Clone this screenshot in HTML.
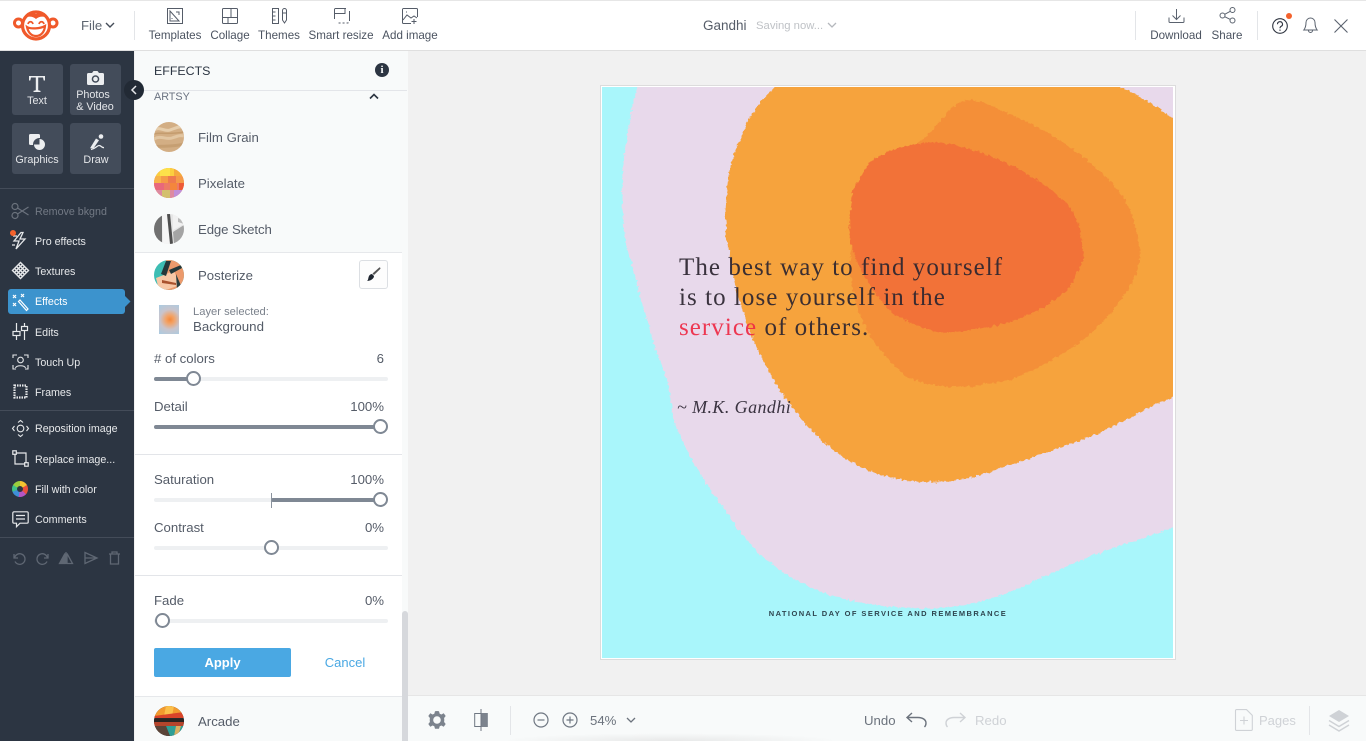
<!DOCTYPE html>
<html><head><meta charset="utf-8"><title>Gandhi</title>
<style>
*{box-sizing:border-box}
html,body{margin:0;padding:0;width:1366px;height:741px;overflow:hidden;background:#f1f1f1;font-family:"Liberation Sans",sans-serif}
.a{position:absolute}
.t{position:absolute;white-space:nowrap;line-height:20px;height:20px;margin-top:2px}
.c{transform:translateX(-50%)}
.r{transform:translateX(-100%)}
.tb{font-size:11.6px;color:#4b5360;top:24px}
.m{font-size:10.7px;color:#e6e8ea;left:35px}
.bl{font-size:10.8px;color:#e4e6e9;text-align:center}
.p{font-size:13.2px;color:#555c68;left:198px}
.l{font-size:13.2px;color:#555c68}
.tr{position:absolute;left:154px;width:234px;height:4px;border-radius:2px;background:#eef0f2}
.fl{position:absolute;height:4px;background:#7f8894;border-radius:2px}
.th{position:absolute;width:15px;height:15px;border-radius:50%;background:#fff;border:2px solid #7f8894}
.sep{position:absolute;background:#e3e5e9;height:1px}
.bt{position:absolute;background:#434c5a;border-radius:3px;width:51px;height:51px}
svg{position:absolute;overflow:visible}
.circ{position:absolute;left:154px;width:30px;height:30px;border-radius:50%;overflow:hidden}
.circ svg{left:0;top:0;overflow:hidden}
.q{font-family:"Liberation Serif",serif;font-size:25px;line-height:20px;letter-spacing:1.05px;color:#2c2530;opacity:.92}
</style></head><body>

<!-- top bar -->
<div class="a" style="left:0;top:0;width:1366px;height:51px;background:#fff;border-top:1px solid #e6e6e6;border-bottom:1px solid #dfdfdf"></div>

<svg style="left:0;top:0" width="70" height="50" viewBox="0 0 70 50">
<circle cx="18.500" cy="23" r="4" fill="#fff" stroke="#f0592a" stroke-width="3"/>
<circle cx="53" cy="23" r="4" fill="#fff" stroke="#f0592a" stroke-width="3"/>
<circle cx="36" cy="25.500" r="13.500" fill="#fff" stroke="#f0592a" stroke-width="3.200"/>
<path d="M24 18c3-5 8-6 12-4 4-2 9-1 12 4-4-2-9-2-12 1-3-3-8-3-12-1z" fill="#f0592a"/>
<path d="M28 24c1-3 4-3 5 0M39 24c1-3 4-3 5 0" fill="none" stroke="#f0592a" stroke-width="1.800"/>
<path d="M27 27c3 2 13 2 18-1-.5 6-4 10-9 10s-8-4-9-9z" fill="#fff" stroke="#f0592a" stroke-width="2.200"/>
</svg>
<div class="t" style="left:81px;top:14px;font-size:13.2px;color:#5d6570">File</div>
<svg style="left:105px;top:22px" width="10" height="7"><path d="M1 1l4 4 4-4" fill="none" stroke="#444c58" stroke-width="1.400"/></svg>
<div class="a" style="left:134px;top:11px;width:1px;height:29px;background:#e3e5e8"></div>

<svg style="left:167px;top:8px" width="16" height="16" fill="none" stroke="#555c68" stroke-width="1"><rect x=".5" y=".5" width="15" height="15"/><path d="M3 3l9 10H3zM5 10v1M9 4h3v3"/></svg>
<svg style="left:222px;top:8px" width="16" height="16" fill="none" stroke="#555c68" stroke-width="1"><rect x=".5" y=".5" width="15" height="15" rx="1"/><path d="M9 .5v9M.5 9.500h15M6 9.500v6"/></svg>
<svg style="left:272px;top:8px" width="16" height="16" fill="none" stroke="#555c68" stroke-width="1"><rect x=".5" y=".5" width="6" height="15"/><path d="M.5 4h3M.5 8h3M.5 12h3M10.500 2.500a2 2 0 0 1 4 0V12l-2 3-2-3zM10.500 5h4"/></svg>
<svg style="left:334px;top:8px" width="16" height="16" fill="none" stroke="#555c68" stroke-width="1"><path d="M.5 11V1.500a1 1 0 0 1 1-1H12M.5 5.500H11V.5"/><path d="M15.500 3v10a2 2 0 0 1-2 2H3M15.500 5v8" stroke-dasharray="2 2"/></svg>
<svg style="left:402px;top:8px" width="16" height="16" fill="none" stroke="#555c68" stroke-width="1"><path d="M9 15.500H1.500a1 1 0 0 1-1-1v-13a1 1 0 0 1 1-1h13a1 1 0 0 1 1 1V9M1 12l4-5 4 3 3-2 3 2M12 11v5M9.500 13.500h5M4 4h1"/></svg>

<div class="t tb c" style="left:175px">Templates</div>
<div class="t tb c" style="left:230px">Collage</div>
<div class="t tb c" style="left:279px">Themes</div>
<div class="t tb c" style="left:341px">Smart resize</div>
<div class="t tb c" style="left:410px">Add image</div>

<div class="t" style="left:703px;top:14px;font-size:13.5px;color:#555c68">Gandhi</div>
<div class="t" style="left:756px;top:14px;font-size:11.300px;color:#bfc2c6">Saving now...</div>
<svg style="left:827px;top:22px" width="10" height="7"><path d="M1 1l4 4 4-4" fill="none" stroke="#b5b8bd" stroke-width="1.300"/></svg>

<div class="a" style="left:1135px;top:11px;width:1px;height:29px;background:#e3e5e8"></div>
<div class="a" style="left:1257px;top:11px;width:1px;height:29px;background:#e3e5e8"></div>
<svg style="left:1168px;top:8px" width="17" height="16" fill="none" stroke="#5a626e" stroke-width="1"><path d="M8.500 1v10M4.500 7.500l4 4 4-4M1 9.500v4a1 1 0 0 0 1 1h13a1 1 0 0 0 1-1v-4"/></svg>
<svg style="left:1219px;top:7px" width="17" height="17" fill="none" stroke="#5a626e" stroke-width="1"><circle cx="3.500" cy="8.500" r="2.500"/><circle cx="13.500" cy="3" r="2.500"/><circle cx="13.500" cy="13.500" r="2.500"/><path d="M5.700 7.300l5.600-3M5.700 9.700l5.600 2.700"/></svg>
<div class="t tb c" style="left:1176px">Download</div>
<div class="t tb c" style="left:1227px">Share</div>

<svg style="left:1272px;top:18px" width="16" height="16" fill="none" stroke="#2e3440" stroke-width="1.100"><circle cx="8" cy="8" r="7.300"/><path d="M5.500 6.200a2.500 2.500 0 1 1 3.600 2.200c-.8.400-1.100 1-1.100 1.900M8 11.500v1.400"/></svg>
<div class="a" style="left:1286px;top:13px;width:6px;height:6px;border-radius:50%;background:#f4622c"></div>
<svg style="left:1303px;top:17px" width="15" height="16" fill="none" stroke="#5a626e" stroke-width="1"><path d="M7.500 1a4.500 4.500 0 0 0-4.500 4.500c0 4-1 6-2.200 7.500h13.400C13 11.500 12 9.500 12 5.500A4.500 4.500 0 0 0 7.500 1zM5.500 13.500a2 2 0 0 0 4 0"/></svg>
<svg style="left:1334px;top:19px" width="14" height="14" fill="none" stroke="#5a626e" stroke-width="1.100"><path d="M.5.500l13 13M13.500.500l-13 13"/></svg>

<!-- sidebar -->
<div class="a" style="left:0;top:51px;width:134px;height:690px;background:#2c3542"></div>
<div class="bt" style="left:12px;top:64px"></div>
<div class="bt" style="left:70px;top:64px"></div>
<div class="bt" style="left:12px;top:123px"></div>
<div class="bt" style="left:70px;top:123px"></div>
<svg style="left:29px;top:76px" width="16" height="16" fill="#eceef0"><path d="M0 0h16v4.500h-1.300L14 1.500H9.200v12.800l2.300.6V16h-7v-1.100l2.300-.6V1.500H2l-.7 3H0z"/></svg>
<div class="t bl c" style="left:37px;top:89px">Text</div>
<svg style="left:87px;top:71px" width="17" height="14"><path d="M5 2l1.500-2h4L12 2h3.500A1.500 1.500 0 0 1 17 3.500v9a1.500 1.500 0 0 1-1.500 1.500h-14A1.500 1.500 0 0 1 0 12.500v-9A1.500 1.500 0 0 1 1.500 2z" fill="#eceef0"/><circle cx="8.500" cy="8" r="3.800" fill="#434c5a"/><circle cx="8.500" cy="8" r="2.300" fill="#eceef0"/></svg>
<div class="t bl c" style="left:93px;top:83px">Photos</div>
<div class="t bl c" style="left:95px;top:95px;width:50px">&amp; Video</div>
<svg style="left:29px;top:134px" width="17" height="17"><rect x="0" y="0" width="11" height="11" rx="1.500" fill="#eceef0"/><circle cx="10.500" cy="10.500" r="6.500" fill="#434c5a"/><path d="M10.500 5a5.500 5.500 0 1 1-5.500 5.500h5.500z" fill="#eceef0"/></svg>
<div class="t bl c" style="left:37px;top:148px">Graphics</div>
<svg style="left:87px;top:134px" width="18" height="17" fill="#eceef0"><circle cx="14" cy="2.500" r="2.300"/><path d="M9 4.500l3 1.800-5.500 8H3z"/><path d="M4 15.500c5-1 6-4 8-4 2.500 0 2 2 5 2.200" fill="none" stroke="#eceef0" stroke-width="1.300"/></svg>
<div class="t bl c" style="left:96px;top:148px">Draw</div>

<div class="a" style="left:0;top:188px;width:134px;height:1px;background:#444c59"></div>

<svg style="left:11px;top:203px" width="18" height="16" fill="none" stroke="#6b727d" stroke-width="1.200"><circle cx="4" cy="3.500" r="3"/><circle cx="4" cy="12.500" r="3"/><path d="M6.500 5l11 7M6.500 11l11-7"/></svg>
<div class="t m" style="top:200px;color:#727984">Remove bkgnd</div>
<svg style="left:12px;top:232px" width="17" height="18" fill="none" stroke="#e6e8ea" stroke-width="1.300"><path d="M9 .5L2 9h5l-3 8 9-10H8l3-6.500zM1 4h4M0 13h3"/></svg>
<div class="a" style="left:10px;top:230px;width:6px;height:6px;border-radius:50%;background:#f4622c"></div>
<div class="t m" style="top:230px">Pro effects</div>
<svg style="left:12px;top:262px" width="17" height="17" fill="none" stroke="#e6e8ea" stroke-width="1.400"><path d="M8.500.5l8 8-8 8-8-8zM4.500 4.500l8 8M12.500 4.500l-8 8M6.500 2.500l8 8M10.500 2.500l-8 8M2.500 6.500l8 8M14.500 6.500l-8 8"/></svg>
<div class="t m" style="top:260px">Textures</div>
<div class="a" style="left:8px;top:289px;width:117px;height:25px;border-radius:3px;background:#3c93cd"></div>
<svg style="left:125px;top:296px" width="6" height="11"><path d="M0 0l5.500 5.500L0 11z" fill="#3c93cd"/></svg>
<svg style="left:12px;top:293px" width="17" height="18" fill="none" stroke="#fff" stroke-width="1.200"><path d="M8 7l8 9-1.500 1.500-8-9zM1 2l3 3M4 2L1 5M9 1l3 3M12 1L9 4M1 10l3 3M4 10l-3 3"/></svg>
<div class="t m" style="top:290px;color:#fff">Effects</div>
<svg style="left:12px;top:323px" width="17" height="17" fill="none" stroke="#e6e8ea" stroke-width="1.200"><path d="M4.500 0v8M4.500 13v4M12.500 0v3M12.500 8v9"/><rect x="1" y="8.500" width="7" height="4"/><rect x="9.500" y="3.500" width="6" height="4"/></svg>
<div class="t m" style="top:321px">Edits</div>
<svg style="left:12px;top:354px" width="17" height="16" fill="none" stroke="#e6e8ea" stroke-width="1.100"><path d="M1 4V1h4M12 1h4v3M1 11v4h3M16 11v4h-3"/><circle cx="8.500" cy="6" r="2.800"/><path d="M3.500 14c1-3 9-3 10 0"/></svg>
<div class="t m" style="top:351px">Touch Up</div>
<svg style="left:13px;top:384px" width="15" height="15" fill="none" stroke="#e6e8ea"><rect x="1.500" y="1.500" width="12" height="12" stroke-width="2.200" stroke-dasharray="1.500 1"/></svg>
<div class="t m" style="top:381px">Frames</div>
<div class="a" style="left:0;top:410px;width:134px;height:1px;background:#444c59"></div>
<svg style="left:12px;top:420px" width="17" height="17" fill="none" stroke="#e6e8ea" stroke-width="1.100"><circle cx="8.500" cy="8.500" r="3.300"/><path d="M6 2.500l2.500-2 2.500 2M6 14.500l2.500 2 2.500-2M2.500 6L.5 8.500l2 2.500M14.500 6l2 2.500-2 2.500"/></svg>
<div class="t m" style="top:417px">Reposition image</div>
<svg style="left:12px;top:450px" width="17" height="17" fill="none" stroke="#e6e8ea" stroke-width="1.200"><rect x=".8" y=".8" width="3.500" height="3.500"/><rect x="12.700" y="12.700" width="3.500" height="3.500"/><path d="M4.500 3h9.500v9.500M3 4.500V14h9.500"/></svg>
<div class="t m" style="top:448px">Replace image...</div>
<div class="a" style="left:12px;top:481px;width:16px;height:16px;border-radius:50%;background:conic-gradient(#f4c430 0 60deg,#e9503c 60deg 130deg,#b455c4 130deg 190deg,#3e8fd8 190deg 250deg,#3fbf8a 250deg 300deg,#9ccc3c 300deg 360deg)"></div>
<div class="a" style="left:17px;top:486px;width:6px;height:6px;border-radius:50%;background:#2c3542"></div>
<div class="t m" style="top:478px">Fill with color</div>
<svg style="left:12px;top:511px" width="17" height="17" fill="none" stroke="#e6e8ea" stroke-width="1.200"><path d="M2 .8h13a1.200 1.200 0 0 1 1.200 1.200v9a1.200 1.200 0 0 1-1.200 1.200H8l-3.500 3.500v-3.500H2A1.200 1.200 0 0 1 .8 11V2A1.200 1.200 0 0 1 2 .8zM4 4.500h9M4 8h9"/></svg>
<div class="t m" style="top:508px">Comments</div>
<div class="a" style="left:0;top:537px;width:134px;height:1px;background:#444c59"></div>
<svg style="left:12px;top:551px" width="110" height="14" fill="none" stroke="#5f6773" stroke-width="1.300"><path d="M2 3v4h4M2.500 7A5.300 5.300 0 1 1 3 10.500"/><path d="M36 3v4h-4M35.500 7a5.300 5.300 0 1 0-.5 3.500"/><path d="M54 1v12M53 2.500v10H47.500z" fill="#5f6773"/><path d="M55 2.500v10h5.500z"/><path d="M73 1.500l12 5.500-12 5.500zM73 7h12"/><path d="M97 3h11M100 3V1h5v2M98.500 3v10h8V3"/></svg>

<!-- panel -->
<div class="a" style="left:135px;top:51px;width:273px;height:690px;background:#f8fafa"></div>
<div class="t" style="left:154px;top:59px;font-size:12.400px;color:#2c3542">EFFECTS</div>
<div class="a" style="left:375px;top:63px;width:14px;height:14px;border-radius:50%;background:#2c3542;color:#fff;font:bold 11px/14px 'Liberation Serif',serif;text-align:center">i</div>
<div class="sep" style="left:135px;top:90px;width:272px"></div>
<div class="t" style="left:154px;top:85px;font-size:10.800px;color:#6a7280">ARTSY</div>
<svg style="left:369px;top:93px" width="10" height="7"><path d="M1 5.500l4-4 4 4" fill="none" stroke="#2c3542" stroke-width="1.600"/></svg>

<div class="circ" style="top:122px;background:#d3ae84"><svg width="30" height="30" fill="none"><path d="M0 8c6-4 10 2 16 0s9-4 14-3" stroke="#e6cdab" stroke-width="3"/><path d="M0 17c7-4 12 1 18-1s8-3 12-2" stroke="#e2c6a2" stroke-width="3"/><path d="M0 25c7-2 14 1 30-3" stroke="#c69f72" stroke-width="3"/><path d="M0 12c8-2 14 1 30-2" stroke="#c49c6e" stroke-width="1.500"/></svg></div>
<div class="t p" style="top:126px">Film Grain</div>
<div class="circ" style="top:168px;background:#f08a4a"><svg width="30" height="30"><rect width="30" height="8" fill="#fbcf3f"/><rect x="6" y="0" width="10" height="8" fill="#fde04a"/><rect x="20" width="10" height="8" fill="#f5a93d"/><rect y="8" width="30" height="7" fill="#f59a48"/><rect x="0" y="8" width="7" height="7" fill="#f7b44a"/><rect x="14" y="8" width="8" height="7" fill="#ee7a4e"/><rect y="15" width="30" height="7" fill="#ed7a66"/><rect x="0" y="15" width="10" height="7" fill="#e8687c"/><rect x="16" y="15" width="7" height="7" fill="#f4863c"/><rect x="25" y="15" width="5" height="7" fill="#ee5a36"/><rect y="22" width="30" height="8" fill="#dd8aa0"/><rect x="8" y="22" width="8" height="8" fill="#d3c06e"/><rect x="20" y="22" width="10" height="8" fill="#c08fd8"/></svg></div>
<div class="t p" style="top:172px">Pixelate</div>
<div class="circ" style="top:214px;background:#e6e6e6"><svg width="30" height="30"><rect width="8" height="30" fill="#707070"/><path d="M8 0h5l3 30H9z" fill="#f5f5f5"/><path d="M13 0h3l3 30h-3z" fill="#4e4e4e"/><path d="M19 0h11v10l-11 6z" fill="#f1f1f1"/><path d="M19 18l11-7v19H20z" fill="#a4a4a4"/><path d="M24 4l6 3v3l-6-2z" fill="#bbb"/></svg></div>
<div class="t p" style="top:218px;letter-spacing:-.1px">Edge Sketch</div>

<!-- active section -->
<div class="a" style="left:135px;top:252px;width:267px;height:445px;background:#fff;border-top:1px solid #e6e8eb;border-bottom:1px solid #e6e8eb"></div>
<div class="circ" style="top:260px;background:#3dbdb3"><svg width="30" height="30"><path d="M12 0h18v30H10z" fill="#ec9a6c"/><path d="M2 18l18-7 6 14-14 5H5z" fill="#f7c8a6"/><path d="M12 1l5 0-5 15-5-2z" fill="#24383a"/><path d="M15 10l12-5 1 3-11 6z" fill="#24383a"/><path d="M8 20l14 3v2l-14-2z" fill="#a9532e"/><path d="M22 14l6 14-5 2z" fill="#2a3f40"/></svg></div>
<div class="t p" style="top:264px">Posterize</div>
<div class="a" style="left:359px;top:260px;width:29px;height:29px;border:1px solid #dcdfe3;border-radius:3px;background:#fdfdfd"></div>
<svg style="left:366px;top:267px" width="15" height="15"><path d="M14 .5c.6.400.6 1 .2 1.500L8 8 6.500 6.500 13 .7c.3-.300.700-.400 1-.200z" fill="#555"/><path d="M6 7l2 2c0 3-4 5-7 5 1.500-1 1-3 2-5 .7-1.200 2-2 3-2z" fill="#1f2630"/></svg>

<div class="a" style="left:159px;top:305px;width:20px;height:29px;background:radial-gradient(circle at 55% 50%,#f5883a 0,#f3a265 22%,#c9c4cc 55%,#a9cbe2 100%)"></div>
<div class="t" style="left:193px;top:300px;font-size:11.200px;color:#7b828c">Layer selected:</div>
<div class="t" style="left:193px;top:315px;font-size:13.300px;color:#555c68">Background</div>

<div class="t l" style="left:154px;top:347px">&#35; of colors</div>
<div class="t l r" style="left:384px;top:347px">6</div>
<div class="tr" style="top:377px"></div><div class="fl" style="left:154px;top:377px;width:39px"></div><div class="th" style="left:186px;top:371px"></div>

<div class="t l" style="left:154px;top:395px">Detail</div>
<div class="t l r" style="left:384px;top:395px">100%</div>
<div class="tr" style="top:425px"></div><div class="fl" style="left:154px;top:425px;width:226px"></div><div class="th" style="left:373px;top:419px"></div>

<div class="sep" style="left:135px;top:454px;width:267px"></div>

<div class="t l" style="left:154px;top:468px">Saturation</div>
<div class="t l r" style="left:384px;top:468px">100%</div>
<div class="tr" style="top:498px"></div><div class="fl" style="left:271px;top:498px;width:109px"></div>
<div class="a" style="left:271px;top:493px;width:1px;height:15px;background:#8a929d"></div><div class="th" style="left:373px;top:492px"></div>

<div class="t l" style="left:154px;top:516px">Contrast</div>
<div class="t l r" style="left:384px;top:516px">0%</div>
<div class="tr" style="top:546px"></div><div class="th" style="left:264px;top:540px"></div>

<div class="sep" style="left:135px;top:575px;width:267px"></div>

<div class="t l" style="left:154px;top:589px">Fade</div>
<div class="t l r" style="left:384px;top:589px">0%</div>
<div class="tr" style="top:619px"></div><div class="th" style="left:155px;top:613px"></div>

<div class="a" style="left:154px;top:648px;width:137px;height:29px;background:#4aa8e3;border-radius:2px;color:#fff;font-weight:bold;font-size:13px;line-height:29px;text-align:center">Apply</div>
<div class="t c" style="left:345px;top:651px;font-size:13px;color:#4aa8e3">Cancel</div>

<div class="circ" style="top:706px;background:#2a2a2a"><svg width="30" height="30"><rect width="30" height="10" fill="#f29a2e"/><path d="M12 0h8l-2 10h-8z" fill="#fbc04a"/><path d="M0 10l30-4v6H0z" fill="#d9442a"/><rect y="13" width="30" height="4" fill="#2a2422"/><path d="M0 16h30v4H0z" fill="#b5452c"/><path d="M0 20h12l4 10H0z" fill="#5b4438"/><path d="M12 20h18v10H16z" fill="#2f9f96"/><path d="M22 20l5 0-3 10h-4z" fill="#d9b062"/></svg></div>
<div class="t p" style="top:710px">Arcade</div>

<div class="a" style="left:402px;top:611px;width:6px;height:130px;background:#d6d8dc;border-radius:3px 3px 0 0"></div>

<!-- canvas area -->
<div class="a" style="left:600px;top:85px;width:576px;height:575px;background:#fff;border:1px solid #dcdcdc"></div>
<svg class="a" style="left:602px;top:87px" width="571" height="571" viewBox="602 87 571 571">
<defs>
<clipPath id="cp"><rect x="602" y="87" width="571" height="571"/></clipPath>
<filter id="rough" x="-5%" y="-5%" width="110%" height="110%"><feTurbulence type="fractalNoise" baseFrequency="0.28" numOctaves="2" seed="4"/><feDisplacementMap in="SourceGraphic" scale="5" xChannelSelector="R" yChannelSelector="G"/></filter>
</defs>
<g clip-path="url(#cp)">
<rect x="602" y="87" width="571" height="571" fill="#a9f6fb"/>
<g filter="url(#rough)">
<path fill="#e8d9eb" d="M642 70C630 110 621 160 622 197C622 235 628 252 633 267C638 290 642 305 648 323C655 350 662 365 667 380C671 400 672 412 674 423C688 455 702 478 718 500C733 522 746 542 763 557C787 577 812 590 837 597C860 603 878 606 896 607C915 609 935 609 951 607C972 604 990 600 1007 593C1032 583 1056 571 1081 560C1112 548 1142 538 1190 522L1190 70Z"/>
<path fill="#f6a33d" d="M778 70L774 88C762 99 755 109 748 120C740 138 733 155 729 173C726 192 725 212 726 230C728 252 732 272 737 293C743 313 750 333 759 353C764 363 769 372 774 380C782 394 790 406 800 417C811 431 824 443 837 453C851 463 866 470 881 475C896 479 910 482 925 482C941 482 956 481 970 478C996 470 1020 462 1044 453C1062 447 1081 441 1099 433C1116 425 1132 417 1148 408C1158 403 1170 398 1190 392L1190 132L1173 118C1156 106 1140 96 1122 88L1105 70Z"/>
<path fill="#f48f38" d="M947 113C955 103 964 99 973 100C982 102 991 105 1000 110C1015 117 1030 122 1043 130C1060 140 1076 151 1090 163C1105 175 1118 188 1127 203C1135 220 1139 238 1140 257C1138 272 1132 285 1123 297C1112 313 1098 328 1083 340C1062 355 1040 368 1017 377C996 384 973 387 950 387C935 386 920 383 907 377C895 367 883 354 873 340C860 320 850 290 850 260C850 210 890 165 930 133C936 126 941 120 947 113Z"/>
<path fill="#f27237" d="M930 142C941 143 952 144 963 147C976 151 988 155 1000 160C1013 166 1025 172 1037 180C1048 187 1058 195 1067 203C1073 212 1078 221 1080 230C1082 240 1083 250 1083 260C1079 271 1074 281 1067 290C1057 299 1045 307 1033 313C1017 320 1000 325 983 328C968 331 954 332 940 333C923 328 907 322 893 313C883 303 874 292 867 280C859 267 853 254 850 240C849 224 850 208 852 193C857 182 863 172 870 162C879 156 889 151 900 148C910 145 920 143 930 142Z"/>
</g>
</g>
</svg>
<div class="t q" style="left:679px;top:256px">The best way to find yourself</div>
<div class="t q" style="left:679px;top:286px">is to lose yourself in the</div>
<div class="t q" style="left:679px;top:316px"><span style="color:#ee2a45">service</span> of others.</div>
<div class="t" style="left:677px;top:395px;font:italic 18px/20px 'Liberation Serif',serif;letter-spacing:.42px;color:#3a3340">~ M.K. Gandhi</div>
<div class="t c" style="left:888px;top:602px;font:bold 7.500px/20px 'Liberation Sans',sans-serif;letter-spacing:1.430px;color:#2f4650">NATIONAL DAY OF SERVICE AND REMEMBRANCE</div>

<!-- bottom bar -->
<div class="a" style="left:408px;top:695px;width:958px;height:46px;background:#f8fafa;border-top:1px solid #e6e6e6"></div>
<div class="a" style="left:500px;top:733px;width:340px;height:8px;background:radial-gradient(ellipse at 50% 100%,#e8e9e9 0,#f8fafa 70%)"></div>
<svg style="left:427px;top:710px" width="20" height="20"><path d="M10 1l2 .2.700 2.500 1.700.800 2.300-1.200 2 2.700-1.600 2 .2 2-.2 2 1.600 2-2 2.700-2.300-1.200-1.700.8-.7 2.500h-4l-.7-2.500-1.700-.8-2.300 1.200-2-2.700 1.600-2-.2-2 .2-2-1.600-2 2-2.700 2.300 1.200 1.700-.8.700-2.500z" fill="#7c838d"/><circle cx="10" cy="10" r="3.800" fill="#f8fafa"/></svg>
<svg style="left:474px;top:709px" width="14" height="22"><rect x=".7" y="4.500" width="12.600" height="13" fill="none" stroke="#6f7782"/><rect x="7" y="4" width="6.500" height="14" fill="#7c838d"/><path d="M7 0v22" stroke="#6f7782"/></svg>
<div class="a" style="left:510px;top:706px;width:1px;height:29px;background:#e3e5e8"></div>
<svg style="left:533px;top:712px" width="46" height="16" fill="none" stroke="#6f7782" stroke-width="1.200"><circle cx="8" cy="8" r="7"/><path d="M4.500 8h7"/><circle cx="37" cy="8" r="7"/><path d="M33.500 8h7M37 4.500v7"/></svg>
<div class="t" style="left:590px;top:709px;font-size:13.200px;color:#6c737d">54%</div>
<svg style="left:626px;top:717px" width="10" height="7"><path d="M1 1l4 4 4-4" fill="none" stroke="#6c737d" stroke-width="1.300"/></svg>
<div class="t" style="left:864px;top:709px;font-size:13.200px;color:#6c737d">Undo</div>
<svg style="left:906px;top:712px" width="21" height="16" fill="none" stroke="#6c737d" stroke-width="1.400"><path d="M6 1L1 5.500 6 10M1 5.500h11c5 0 8 2.500 8 5.500 0 2-.5 3-1.500 4"/></svg>
<svg style="left:945px;top:712px" width="21" height="16" fill="none" stroke="#cfd2d6" stroke-width="1.400"><path d="M15 1l5 4.500L15 10M20 5.500H9c-5 0-8 2.500-8 5.500 0 2 .5 3 1.500 4"/></svg>
<div class="t" style="left:975px;top:709px;font-size:13.200px;color:#cfd2d6">Redo</div>
<svg style="left:1235px;top:709px" width="18" height="22" fill="none" stroke="#cfd2d6" stroke-width="1.100"><path d="M1.500.6h10l5.800 5.800v14a1 1 0 0 1-1 1H1.500a1 1 0 0 1-1-1V1.600a1 1 0 0 1 1-1zM9 7.500v8M5 11.500h8"/></svg>
<div class="t" style="left:1259px;top:709px;font-size:13px;color:#cfd2d6">Pages</div>
<div class="a" style="left:1309px;top:706px;width:1px;height:29px;background:#e3e5e8"></div>
<svg style="left:1328px;top:710px" width="22" height="22"><path d="M11 0l10 6-10 6L1 6z" fill="#cfd2d6"/><path d="M1 10.500l10 6 10-6M1 15l10 6 10-6" fill="none" stroke="#cfd2d6" stroke-width="1.500"/></svg>

<!-- collapse -->
<div class="a" style="left:124px;top:80px;width:20px;height:20px;border-radius:50%;background:#222a35"></div>
<svg style="left:131px;top:85px" width="6" height="10"><path d="M5 1L1 5l4 4" fill="none" stroke="#e6e8ea" stroke-width="1.500"/></svg>
</body></html>
